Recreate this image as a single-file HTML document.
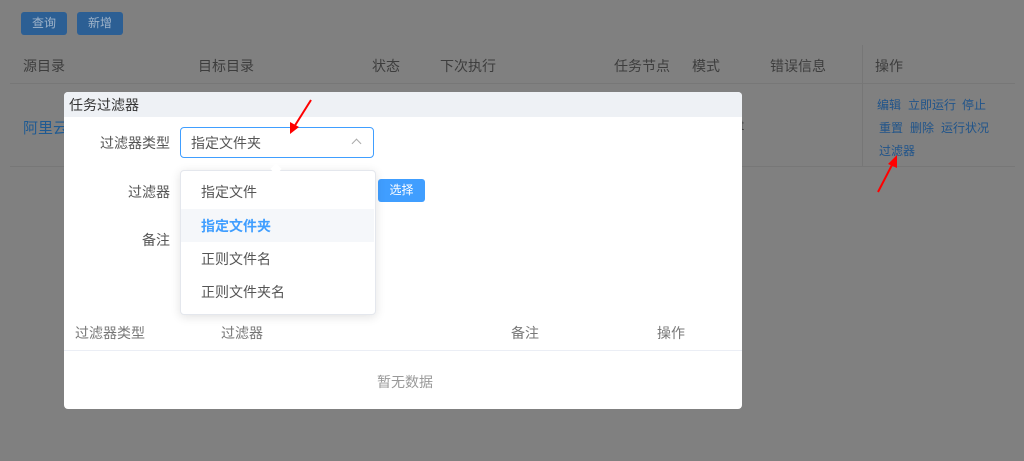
<!DOCTYPE html>
<html><head><meta charset="utf-8"><style>
body{margin:0;width:1024px;height:461px;background:#808080;font-family:"Liberation Sans","Noto Sans CJK SC",sans-serif;position:relative;overflow:hidden;font-size:14px}
.a{position:absolute;white-space:nowrap}
.btn{background:#2c5f94;color:#9fb3c9;border-radius:3px;width:46px;height:23px;line-height:23px;text-align:center;font-size:12px}
.th{color:#3d3d3d;font-size:14px;top:56px}
.lk{color:#20548a;font-size:12px}
.dlg{left:64px;top:92px;width:678px;height:317px;background:#fff;border-radius:4px;overflow:hidden}
</style></head><body>
<div class="a btn" style="left:21px;top:12px">查询</div>
<div class="a btn" style="left:77px;top:12px">新增</div>
<div class="a th" style="left:23px">源目录</div>
<div class="a th" style="left:198px">目标目录</div>
<div class="a th" style="left:372px">状态</div>
<div class="a th" style="left:440px">下次执行</div>
<div class="a th" style="left:614px">任务节点</div>
<div class="a th" style="left:692px">模式</div>
<div class="a th" style="left:770px">错误信息</div>
<div class="a th" style="left:875px">操作</div>
<div class="a" style="left:10px;top:83px;width:1005px;height:1px;background:#777"></div>
<div class="a" style="left:862px;top:45px;width:1px;height:122px;background:#767676"></div>
<div class="a" style="left:10px;top:166px;width:1005px;height:1px;background:#777"></div>
<div class="a" style="left:23px;top:117px;color:#1f5a92;font-size:15px">阿里云</div>
<div class="a" style="left:740px;top:117px;color:#3d3d3d;font-size:14px">t</div>
<div class="a lk" style="left:877px;top:96px">编辑</div>
<div class="a lk" style="left:908px;top:96px">立即运行</div>
<div class="a lk" style="left:962px;top:96px">停止</div>
<div class="a lk" style="left:879px;top:119px">重置</div>
<div class="a lk" style="left:910px;top:119px">删除</div>
<div class="a lk" style="left:941px;top:119px">运行状况</div>
<div class="a lk" style="left:879px;top:142px">过滤器</div>
<div class="a dlg">
 <div class="a" style="left:0;top:0;width:678px;height:25px;background:#eef1f5"></div>
 <div class="a" style="left:5px;top:3px;color:#333;font-size:14px">任务过滤器</div>
 <div class="a" style="left:36px;top:41px;color:#555">过滤器类型</div>
 <div class="a" style="left:116px;top:35px;width:192px;height:29px;border:1px solid #409eff;border-radius:4px"></div>
 <div class="a" style="left:127px;top:41px;color:#555">指定文件夹</div>
 <div class="a" style="left:289px;top:48px;width:6px;height:6px;border-left:1px solid #aaa;border-top:1px solid #aaa;transform:rotate(45deg)"></div>
 <div class="a" style="left:64px;top:90px;color:#555">过滤器</div>
 <div class="a" style="left:78px;top:138px;color:#555">备注</div>
 <div class="a" style="left:314px;top:87px;width:47px;height:23px;background:#409eff;color:#fff;border-radius:3px;text-align:center;line-height:23px;font-size:12px">选择</div>
 <div class="a" style="left:11px;top:231px;color:#777">过滤器类型</div>
 <div class="a" style="left:157px;top:231px;color:#777">过滤器</div>
 <div class="a" style="left:447px;top:231px;color:#777">备注</div>
 <div class="a" style="left:593px;top:231px;color:#777">操作</div>
 <div class="a" style="left:0;top:258px;width:678px;height:1px;background:#ebeef5"></div>
 <div class="a" style="left:313px;top:280px;color:#999">暂无数据</div>
</div>
<div class="a" style="left:180px;top:170px;width:194px;height:143px;background:#fff;border:1px solid #e4e7ed;border-radius:4px;box-shadow:0 2px 10px rgba(0,0,0,.12)"></div>
<div class="a" style="left:272px;top:165px;width:8px;height:8px;background:#fff;transform:rotate(45deg)"></div>
<div class="a" style="left:181px;top:209px;width:193px;height:33px;background:#f5f7fa"></div>
<div class="a" style="left:201px;top:182px;color:#555">指定文件</div>
<div class="a" style="left:201px;top:216px;color:#409eff;font-weight:bold">指定文件夹</div>
<div class="a" style="left:201px;top:249px;color:#555">正则文件名</div>
<div class="a" style="left:201px;top:282px;color:#555">正则文件夹名</div>
<svg class="a" style="left:0;top:0" width="1024" height="461">
<g stroke="#f00" stroke-width="2" fill="#f00">
<line x1="311" y1="100" x2="294" y2="127"/><polygon points="290,134 290,122 299,127" stroke="none"/>
<line x1="878" y1="192" x2="893" y2="163"/><polygon points="897,155 897,168 888,164" stroke="none"/>
</g></svg>
</body></html>
